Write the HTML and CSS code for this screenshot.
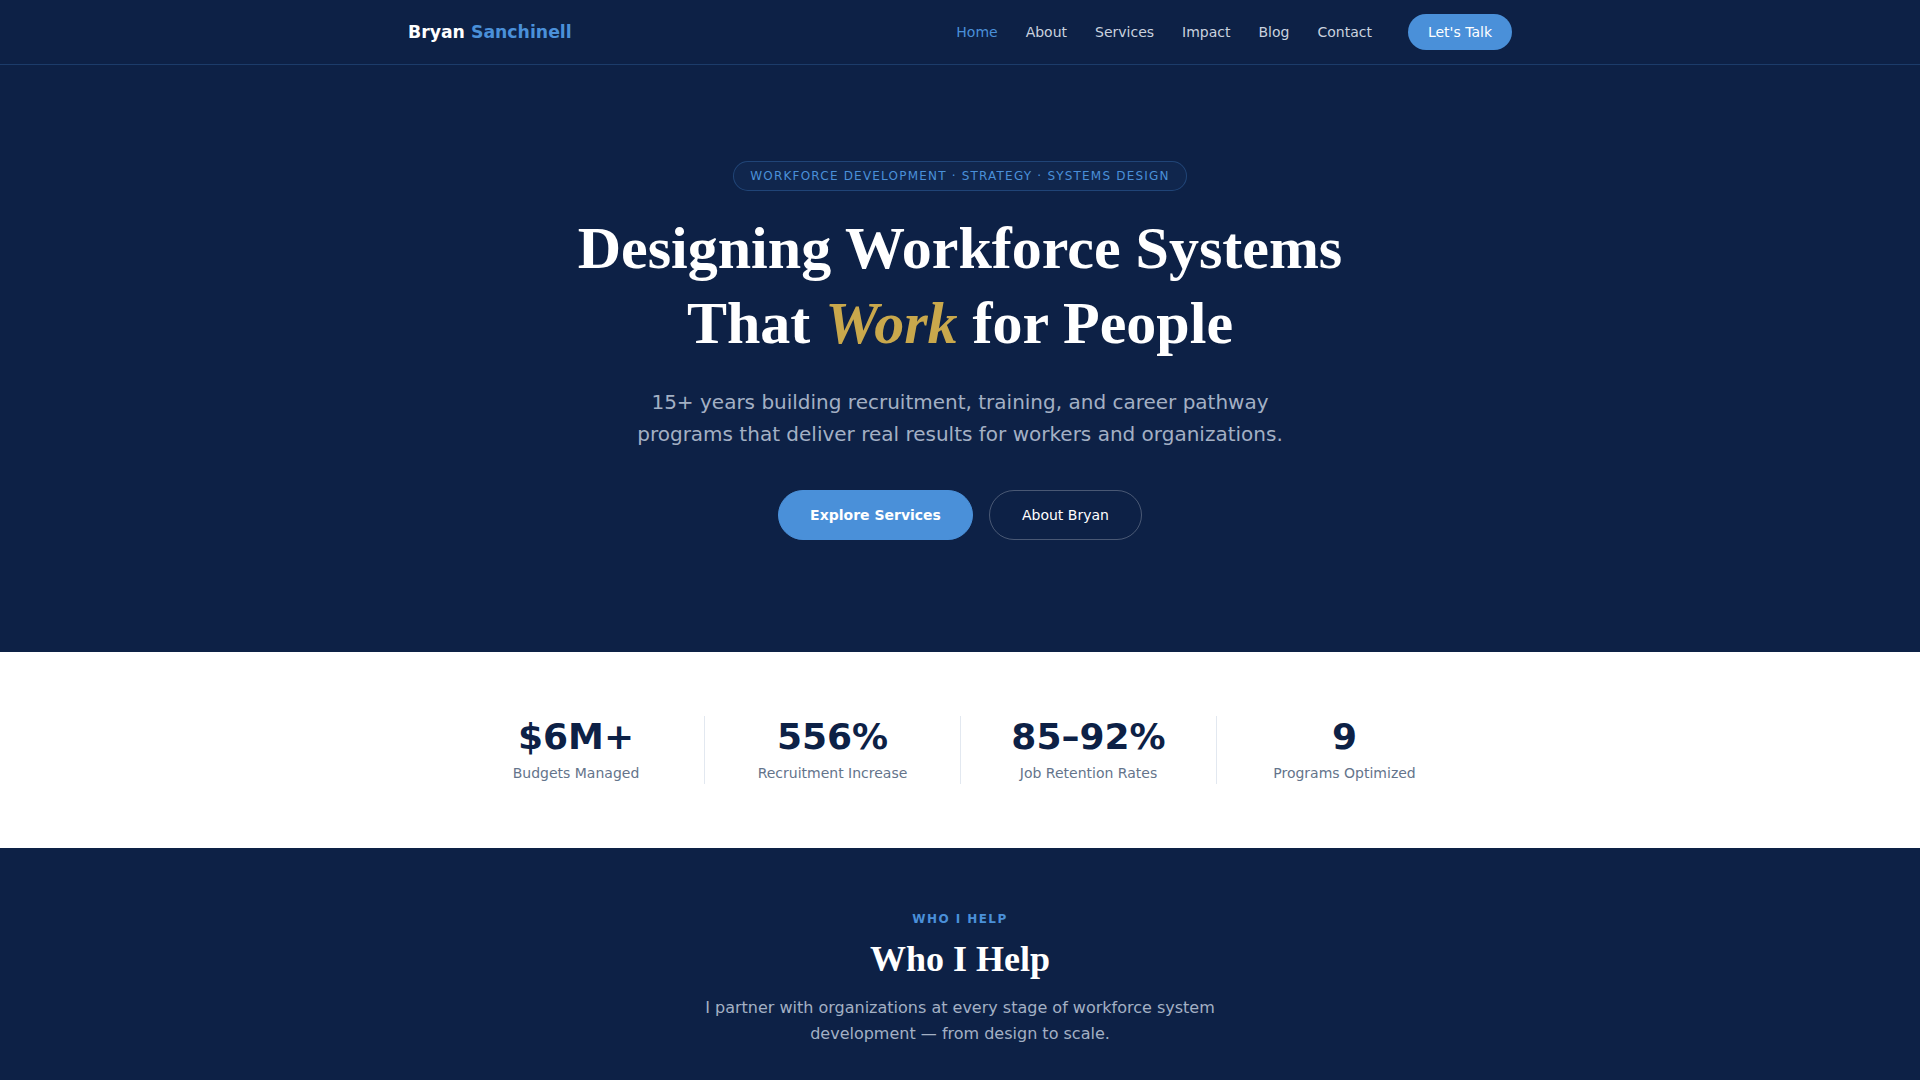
FILE: index.html
```html
<!DOCTYPE html>
<html lang="en">
<head>
<meta charset="utf-8">
<title>Bryan Sanchinell — Workforce Systems</title>
<link rel="stylesheet" href="styles.css">
</head>
<body>
<header class="site-header">
  <div class="nav-inner">
    <a class="logo" href="#">Bryan <span>Sanchinell</span></a>
    <nav class="nav">
      <ul class="nav-links">
        <li><a class="active" href="#">Home</a></li>
        <li><a href="#">About</a></li>
        <li><a href="#">Services</a></li>
        <li><a href="#">Impact</a></li>
        <li><a href="#">Blog</a></li>
        <li><a href="#">Contact</a></li>
      </ul>
      <a class="btn-talk" href="#">Let's Talk</a>
    </nav>
  </div>
</header>

<section class="hero">
  <div class="badge">Workforce Development · Strategy · Systems Design</div>
  <h1 class="hero-title">Designing Workforce Systems<br>That <em>Work</em> for People</h1>
  <p class="hero-sub">15+ years building recruitment, training, and career pathway programs that deliver real results for workers and organizations.</p>
  <div class="hero-actions">
    <a class="btn btn-primary" href="#">Explore Services</a>
    <a class="btn btn-outline" href="#">About Bryan</a>
  </div>
</section>

<section class="stats">
  <div class="stats-grid">
    <div class="stat"><div class="stat-num">$6M+</div><div class="stat-label">Budgets Managed</div></div>
    <div class="stat"><div class="stat-num">556%</div><div class="stat-label">Recruitment Increase</div></div>
    <div class="stat"><div class="stat-num">85–92%</div><div class="stat-label">Job Retention Rates</div></div>
    <div class="stat"><div class="stat-num">9</div><div class="stat-label">Programs Optimized</div></div>
  </div>
</section>

<section class="help">
  <div class="eyebrow">Who I Help</div>
  <h2 class="section-title">Who I Help</h2>
  <p class="section-sub">I partner with organizations at every stage of workforce system development — from design to scale.</p>
</section>
</body>
</html>
```

FILE: styles.css
```css
* { box-sizing: border-box; }

body {
  margin: 0;
  font-family: "DejaVu Sans", "Liberation Sans", sans-serif;
  background: #0d2146;
  color: #ffffff;
}

a { text-decoration: none; }

/* Header */
.site-header {
  border-bottom: 1px solid rgba(74, 144, 217, 0.25);
}

.nav-inner {
  max-width: 1104px;
  height: 64px;
  margin: 0 auto;
  display: flex;
  align-items: center;
  justify-content: space-between;
}

.logo {
  font-size: 17.3px;
  font-weight: 700;
  color: #ffffff;
}

.logo span { color: #4a90d9; }

.nav {
  display: flex;
  align-items: center;
  gap: 36px;
}

.nav-links {
  display: flex;
  gap: 28px;
  list-style: none;
  margin: 0;
  padding: 0;
}

.nav-links a {
  display: block;
  font-size: 14px;
  line-height: 16px;
  color: #c9d2df;
}

.nav-links a.active { color: #4a90d9; }

.btn-talk {
  display: inline-flex;
  align-items: center;
  height: 36px;
  padding: 0 20px;
  border-radius: 18px;
  background: #4a90d9;
  color: #ffffff;
  font-size: 14px;
}

/* Hero */
.hero {
  padding: 96px 24px 112px;
  display: flex;
  flex-direction: column;
  align-items: center;
  text-align: center;
}

.badge {
  display: inline-block;
  padding: 6px 16px;
  line-height: 16px;
  font-size: 12px;
  letter-spacing: 0.1em;
  text-transform: uppercase;
  color: #4a90d9;
  border: 1px solid rgba(74, 144, 217, 0.3);
  border-radius: 999px;
  background: rgba(74, 144, 217, 0.05);
  margin-bottom: 20px;
}

.hero-title {
  font-family: "Liberation Serif", "Times New Roman", serif;
  font-size: 60px;
  line-height: 1.25;
  font-weight: 700;
  margin: 0 0 25px;
  color: #ffffff;
}

.hero-title em {
  font-style: italic;
  color: #c9a84c;
}

.hero-sub {
  font-size: 20px;
  line-height: 1.6;
  color: #a3b0c4;
  max-width: 680px;
  margin: 0 0 40px;
}

.hero-actions {
  display: flex;
  gap: 16px;
  justify-content: center;
}

.btn {
  display: inline-block;
  font-size: 14px;
  line-height: 16px;
  padding: 16px 32px;
  border-radius: 999px;
  border: 1px solid transparent;
  color: #ffffff;
}

.btn-primary {
  background: #4a90d9;
  border-color: #4a90d9;
  font-weight: 700;
  padding: 16px 31px;
}

.btn-outline {
  border-color: rgba(255, 255, 255, 0.25);
}

/* Stats */
.stats {
  background: #ffffff;
  padding: 64px 0;
}

.stats-grid {
  max-width: 1024px;
  margin: 0 auto;
  display: grid;
  grid-template-columns: repeat(4, 1fr);
}

.stat { text-align: center; }

.stat + .stat { border-left: 1px solid #e2e8f0; }

.stat-num {
  font-size: 36px;
  line-height: 42px;
  font-weight: 700;
  color: #0d2146;
}

.stat-label {
  margin-top: 5px;
  font-size: 14px;
  line-height: 21px;
  color: #64748b;
}

/* Who I help */
.help {
  padding: 64px 24px 96px;
  text-align: center;
}

.eyebrow {
  font-size: 12px;
  font-weight: 700;
  letter-spacing: 0.12em;
  text-transform: uppercase;
  color: #4a90d9;
  margin-bottom: 12px;
}

.section-title {
  font-family: "Liberation Serif", "Times New Roman", serif;
  font-size: 36px;
  line-height: 1.2;
  font-weight: 700;
  margin: 0 0 14px;
}

.section-sub {
  font-size: 16px;
  line-height: 1.6;
  color: #a3b0c4;
  max-width: 560px;
  margin: 0 auto;
}
```
